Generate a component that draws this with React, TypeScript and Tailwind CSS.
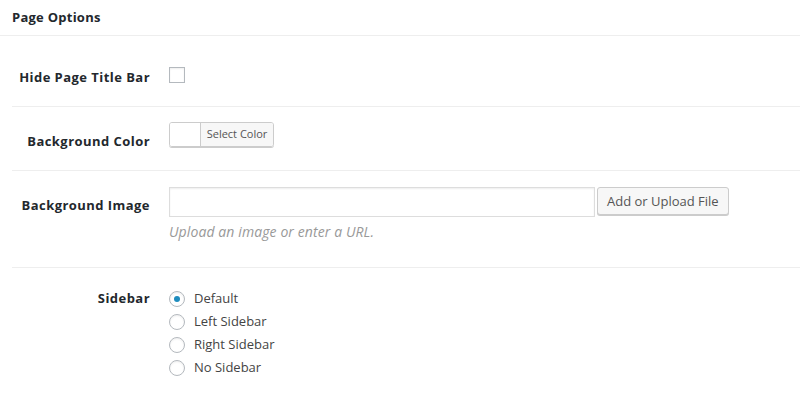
const options = ["Default", "Left Sidebar", "Right Sidebar", "No Sidebar"];

const Label = ({ text, pt }: { text: string; pt: string }) => (
  <div
    className={`w-[138px] shrink-0 text-right text-[13px] leading-5 font-bold tracking-[0.45px] text-[#23282d] ${pt}`}
  >
    {text}
  </div>
);

export default function App() {
  return (
    <div
      className="w-[800px] h-[398px] bg-white overflow-hidden"
      style={{ fontFamily: '"Open Sans", sans-serif' }}
    >
      <div className="h-9 border-b border-[#eeeeee] px-3 flex items-center">
        <span className="text-[13px] font-bold tracking-[0.25px] text-[#23282d]">Page Options</span>
      </div>
      <div className="pl-3">
        {/* hide title bar */}
        <div className="flex border-b border-[#eeeeee] h-[71px]">
          <Label text="Hide Page Title Bar" pt="pt-[31px]" />
          <div className="pl-[19px] pt-[31px]">
            <div className="w-4 h-4 border border-[#b4b9be] bg-white shadow-[inset_0_1px_2px_rgba(0,0,0,0.07)]" />
          </div>
        </div>

        {/* background color */}
        <div className="flex border-b border-[#eeeeee] h-[64px]">
          <Label text="Background Color" pt="pt-[24px]" />
          <div className="pl-[19px] pt-[15px]">
            <div className="flex h-[25px] w-[105px] border border-[#cccccc] rounded-[3px] shadow-[0_1px_0_#cccccc] overflow-hidden">
              <div className="w-[31px] bg-white border-r border-[#cccccc]" />
              <div className="flex-1 bg-[#f7f7f7] text-[11px] text-[#555555] flex items-center justify-center">
                Select Color
              </div>
            </div>
          </div>
        </div>

        {/* background image */}
        <div className="flex border-b border-[#eeeeee] h-[97px]">
          <Label text="Background Image" pt="pt-[24px]" />
          <div className="pl-[19px] pt-[16px]">
            <div className="flex items-start gap-[2px]">
              <div className="w-[426px] h-[30px] border border-[#dddddd] bg-white shadow-[inset_0_1px_2px_rgba(0,0,0,0.07)]" />
              <button className="h-[28px] px-[9px] text-[13px] text-[#555555] bg-[#f7f7f7] border border-[#cccccc] rounded-[3px] shadow-[0_1px_0_#cccccc] leading-none">
                Add or Upload File
              </button>
            </div>
            <div className="mt-[5px] text-[14px] tracking-[0.1px] italic text-[#999999] leading-5">
              Upload an image or enter a URL.
            </div>
          </div>
        </div>

        {/* sidebar */}
        <div className="flex">
          <Label text="Sidebar" pt="pt-[20px]" />
          <div className="pl-[19px] pt-[23px] flex flex-col gap-[7px]">
            {options.map((o, i) => (
              <div key={o} className="flex items-center h-4 text-[13px] text-[#444444]">
                <div className="w-4 h-4 rounded-full border border-[#b4b9be] bg-white flex items-center justify-center shadow-[inset_0_1px_2px_rgba(0,0,0,0.07)]">
                  {i === 0 && <div className="w-[6px] h-[6px] rounded-full bg-[#1e8cbe]" />}
                </div>
                <span className="ml-[9px]">{o}</span>
              </div>
            ))}
          </div>
        </div>
      </div>
    </div>
  );
}
